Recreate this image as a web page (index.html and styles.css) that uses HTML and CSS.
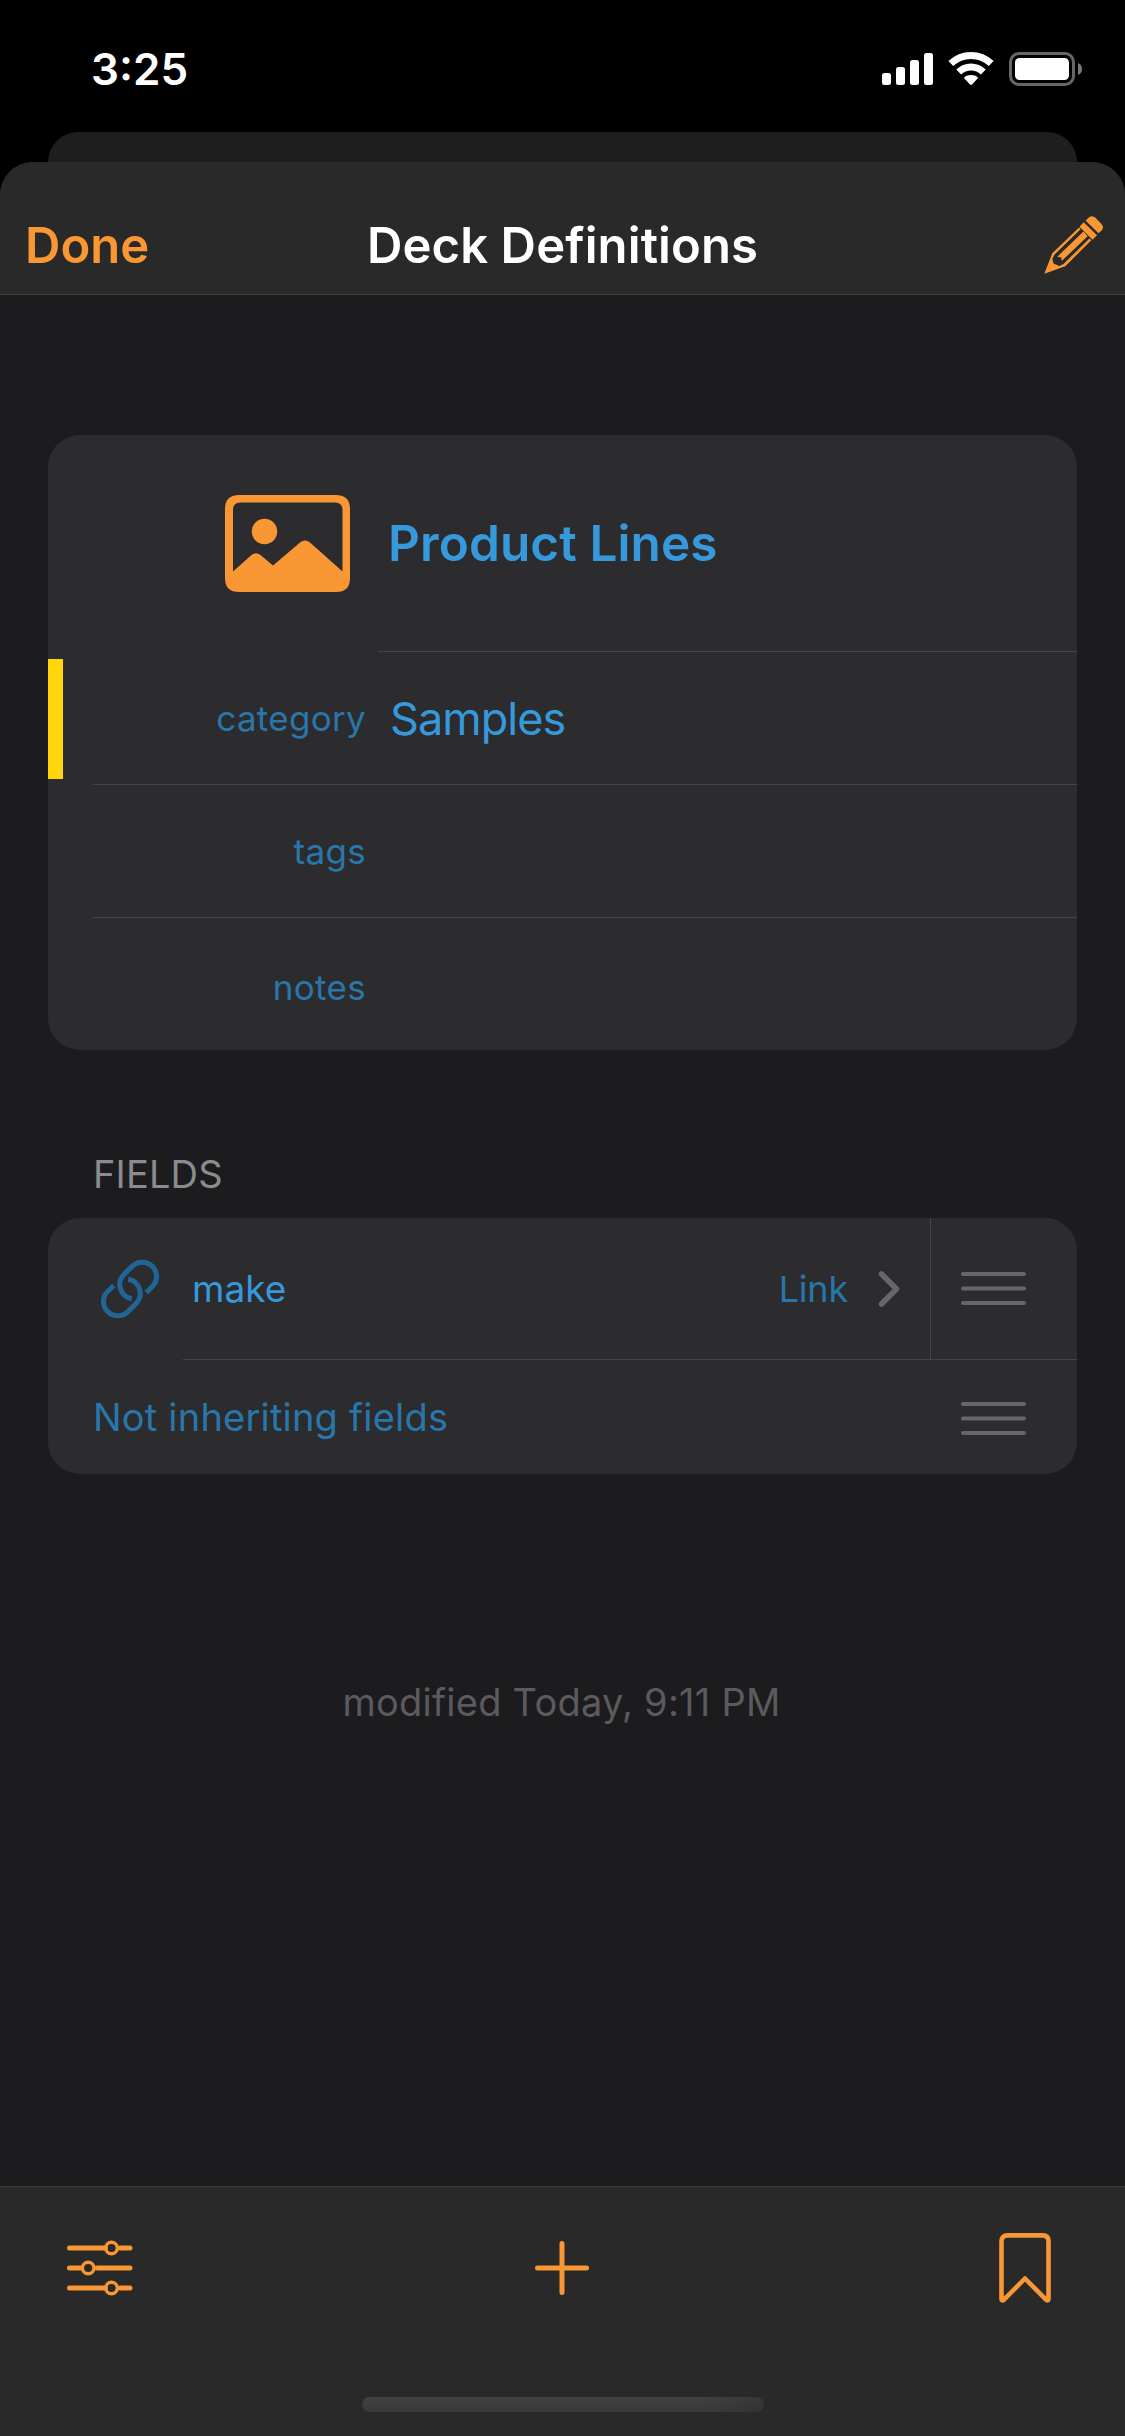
FILE: index.html
```html
<!DOCTYPE html>
<html lang="en">
<head>
<meta charset="utf-8">
<title>Deck Definitions</title>
<link rel="stylesheet" href="styles.css">
</head>
<body>
<div class="screen">
  <div class="status">
    <span class="time">3:25</span>
    <svg class="status-icons" viewBox="0 0 202 36" width="202" height="36">
      <g fill="#fff">
        <rect x="1" y="22" width="9" height="12" rx="2.5"/>
        <rect x="15" y="16" width="9" height="18" rx="2.5"/>
        <rect x="29" y="9" width="9" height="25" rx="2.5"/>
        <rect x="43" y="2" width="9" height="32" rx="2.5"/>
        <path d="M90 24c2.800 0 5 .9 6.600 2.300.4.400.4.900 0 1.300L91 33.400c-.6.600-1.400.600-2 0l-5.600-5.800c-.4-.4-.4-.9 0-1.300C85 24.900 87.200 24 90 24z"/>
      </g>
      <g fill="none" stroke="#fff" stroke-width="7">
        <path d="M69.800 12.600a29 29 0 0 1 40.400 0"/>
        <path d="M77.700 21.100a17.600 17.600 0 0 1 24.600 0"/>
      </g>
      <rect x="129.500" y="2.500" width="63" height="31" rx="8.500" fill="none" stroke="#676767" stroke-width="3"/>
      <rect x="134" y="7" width="54" height="22" rx="4.500" fill="#fff"/>
      <path d="M197 12c2.700 1 4 3.300 4 6s-1.300 5-4 6z" fill="#7a7a7a"/>
    </svg>
  </div>
  <div class="sheet-behind"></div>
  <div class="sheet">
    <header class="navbar">
      <span class="done">Done</span>
      <h1 class="title">Deck Definitions</h1>
      <svg class="pencil" viewBox="0 0 60 60" width="60" height="60">
        <g fill="#f89733">
          <path d="M41.700 5.700L44.500 2.700Q48 -.2 51.500 2.800L57.500 9Q60.500 12.500 57.500 15.500L54.500 18.300Z"/>
          <path d="M39.700 7.200L53 20.200L48.500 24.700L35.500 11.700Z"/>
          <path fill-rule="evenodd" d="M35 12.500L8.300 38.300L.3 58.700L21.300 51.300L47.300 25.300L45.500 23.500L19.500 49L15.300 51L9.500 48.500L8.300 44L10.600 39.600L36.600 14.200Z"/>
          <path d="M39.500 16.500L43.700 21.200L17.700 46L17.300 42.500L13.300 41.700Z"/>
        </g>
      </svg>
    </header>

    <main class="content">
      <section class="card">
        <div class="row row-name">
          <div class="lead">
            <svg class="picture" viewBox="0 0 125 97" width="125" height="97">
              <path fill="#f89733" fill-rule="evenodd" d="M14 0h97q14 0 14 14v69q0 14-14 14H14Q0 97 0 83V14Q0 0 14 0zM15.500 7.500Q8 7.500 8 15v61.500L26.500 60q4.500-3.500 9 0L48 70.500 75 47.500q5-4 10 0L117.500 76.500V15q0-7.500-7.500-7.500z"/>
              <circle cx="39.500" cy="36.500" r="12.700" fill="#f89733"/>
            </svg>
          </div>
          <div class="value-name"><span class="t-name">Product Lines</span></div>
        </div>
        <div class="row row-category">
          <span class="label">category</span>
          <span class="t-samples">Samples</span>
        </div>
        <div class="row inset"><span class="label">tags</span></div>
        <div class="row inset last"><span class="label">notes</span></div>
      </section>

      <h2 class="heading">FIELDS</h2>

      <section class="card">
        <div class="field">
          <svg class="link" viewBox="0 0 60 62" width="60" height="62">
            <g fill="none" stroke="#1f6697" stroke-width="5">
              <path d="M46.300 34.600L52.800 28.100A14.300 14.300 0 0 0 32.600 7.900L23.900 16.600A14.300 14.300 0 0 0 31.800 40.700"/>
              <path d="M46.300 34.600L52.800 28.100A14.300 14.300 0 0 0 32.600 7.900L23.900 16.600A14.300 14.300 0 0 0 31.800 40.700" transform="rotate(180 30 31)"/>
            </g>
          </svg>
          <div class="field-body">
            <span class="field-name">make</span>
            <span class="field-type">Link</span>
            <svg class="chevron" viewBox="0 0 22 38" width="22" height="38"><path d="M3.500 4L18.500 19L3.500 34" fill="none" stroke="#67666b" stroke-width="5.500" stroke-linecap="round" stroke-linejoin="round"/></svg>
            <div class="grip-cell">
              <svg class="grip" viewBox="0 0 65 33" width="65" height="33"><path d="M2 2h61M2 16.500h61M2 31h61" stroke="#67666b" stroke-width="4" stroke-linecap="round"/></svg>
            </div>
          </div>
        </div>
        <div class="inherit">
          <span class="inherit-text">Not inheriting fields</span>
          <svg class="grip" viewBox="0 0 65 33" width="65" height="33"><path d="M2 2h61M2 16.500h61M2 31h61" stroke="#67666b" stroke-width="4" stroke-linecap="round"/></svg>
        </div>
      </section>

      <p class="modified">modified Today, 9:11 PM</p>
    </main>

    <footer class="toolbar">
      <div class="tools">
        <svg viewBox="0 0 66 56" width="66" height="56">
          <g fill="none" stroke="#f89733" stroke-linecap="round">
            <path stroke-width="5" d="M2.500 8h36M53 8h10M2.500 28h11M30 28h33M2.500 48h36M53 48h10"/>
            <g stroke-width="3.400"><circle cx="44.500" cy="8" r="5.800"/><circle cx="21.200" cy="28" r="5.800"/><circle cx="44.500" cy="48" r="5.800"/></g>
          </g>
        </svg>
        <svg class="plus" viewBox="0 0 54 54" width="54" height="54"><path d="M27 2.500v49M2.500 27h49" stroke="#f89733" stroke-width="5" stroke-linecap="round"/></svg>
        <svg class="bookmark" viewBox="0 0 52 70" width="52" height="70"><path d="M8.500 2.400h35q6 0 6 6v57.500q0 2-2 1.200L26 45.500 4.500 67.100q-2 .8-2-1.200V8.400q0-6 6-6z" fill="none" stroke="#f89733" stroke-width="4.600" stroke-linejoin="round"/></svg>
      </div>
      <div class="home"></div>
    </footer>
  </div>
</div>
</body>
</html>
```
FILE: styles.css
```css
* { box-sizing: border-box; }
body { margin: 0; background: #000; font-family: Inter, "Liberation Sans", sans-serif; }
svg { display: block; flex: none; }
span, h1, h2, p { white-space: nowrap; }
.screen { width: 1125px; height: 2436px; display: flex; flex-direction: column; overflow: hidden; background: #000; }

.status { height: 132px; flex: none; display: flex; justify-content: space-between; align-items: flex-start; padding: 51px 42px 0 91px; }
.time { color: #fff; font-size: 44px; font-weight: 600; line-height: 36px; }

.sheet-behind { height: 30px; flex: none; margin: 0 48px; background: #1e1e1e; border-radius: 30px 30px 0 0; }
.sheet { flex: 1; display: flex; flex-direction: column; background: #1c1c1e; border-radius: 33px 33px 0 0; overflow: hidden; }

.navbar { height: 133px; flex: none; display: grid; grid-template-columns: 1fr auto 1fr; align-items: center; padding: 35px 21px 0 21px; background: #292929; border-bottom: 1px solid #3d3d3f; }
.done { padding-left: 4px; color: #f89733; font-size: 49px; font-weight: 600; line-height: 62px; }
.title { margin: 0; color: #fff; font-size: 49px; font-weight: 600; line-height: 62px; letter-spacing: .12px; }
.pencil { justify-self: end; margin-bottom: 2px; }

.content { flex: 1; display: flex; flex-direction: column; padding: 140px 48px 0; }
.card { background: #2c2c2e; border-radius: 32px; overflow: hidden; display: flex; flex-direction: column; }
.row { display: flex; align-items: center; height: 133px; }
.row-name { height: 217px; }
.lead { width: 330px; padding-left: 177px; }
.value-name { flex: 1; height: 217px; display: flex; align-items: center; padding-left: 10px; border-bottom: 1px solid #454547; }
.t-name { color: #3699dc; font-size: 49.500px; font-weight: 600; letter-spacing: .1px; }
.row-category { background: linear-gradient(#ffd60a, #ffd60a) 0 7px / 15px 120px no-repeat, linear-gradient(#454547, #454547) 45px 100% / 100% 1px no-repeat; }
.row-category .label { padding-bottom: 1px; }
.label { width: 318px; text-align: right; color: #2976aa; font-size: 35px; letter-spacing: .3px; }
.t-samples { margin-left: 24px; color: #3699dc; font-size: 45px; letter-spacing: -.95px; }
.inset { margin-left: 45px; border-bottom: 1px solid #454547; }
.inset .label { width: 273px; }
.last { height: 132px; border: 0; padding-top: 6px; }

.heading { margin: 98px 0 0 45px; height: 70px; color: #8b8b90; font-size: 38px; font-weight: 400; line-height: 52px; letter-spacing: .15px; }
.field { height: 142px; display: flex; align-items: center; padding-left: 52px; }
.field-body { flex: 1; height: 142px; display: flex; align-items: center; margin-left: 23px; padding-left: 9px; border-bottom: 1px solid #454547; }
.field-name { color: #3699dc; font-size: 37px; }
.field-type { margin-left: auto; color: #2976aa; font-size: 36px; letter-spacing: -.2px; }
.chevron { margin: 0 30px 0 30px; }
.grip-cell { width: 147px; height: 141px; display: flex; align-items: center; padding-left: 30px; border-left: 1px solid #454547; }
.inherit { height: 114px; display: flex; align-items: center; justify-content: space-between; padding: 0 51px 0 45px; }
.inherit .grip { margin-top: 3px; }
.inherit-text { color: #2976aa; font-size: 38px; letter-spacing: .2px; }
.modified { margin: 202px 2px 0 0; text-align: center; color: #5b5b5f; font-size: 38px; line-height: 52px; letter-spacing: .25px; }

.toolbar { height: 250px; flex: none; background: #292929; border-top: 1px solid #3d3d3f; }
.tools { height: 162px; display: grid; grid-template-columns: 1fr auto 1fr; align-items: center; padding: 0 67px; }
.plus { margin-right: 1px; }
.bookmark { justify-self: end; margin-right: 7.500px; }
.home { width: 402px; height: 15px; margin: 48px 0 0 362px; border-radius: 8px; background: linear-gradient(90deg, transparent 85%, rgba(41, 41, 41, .4)), linear-gradient(#414141, #393939); }
```
